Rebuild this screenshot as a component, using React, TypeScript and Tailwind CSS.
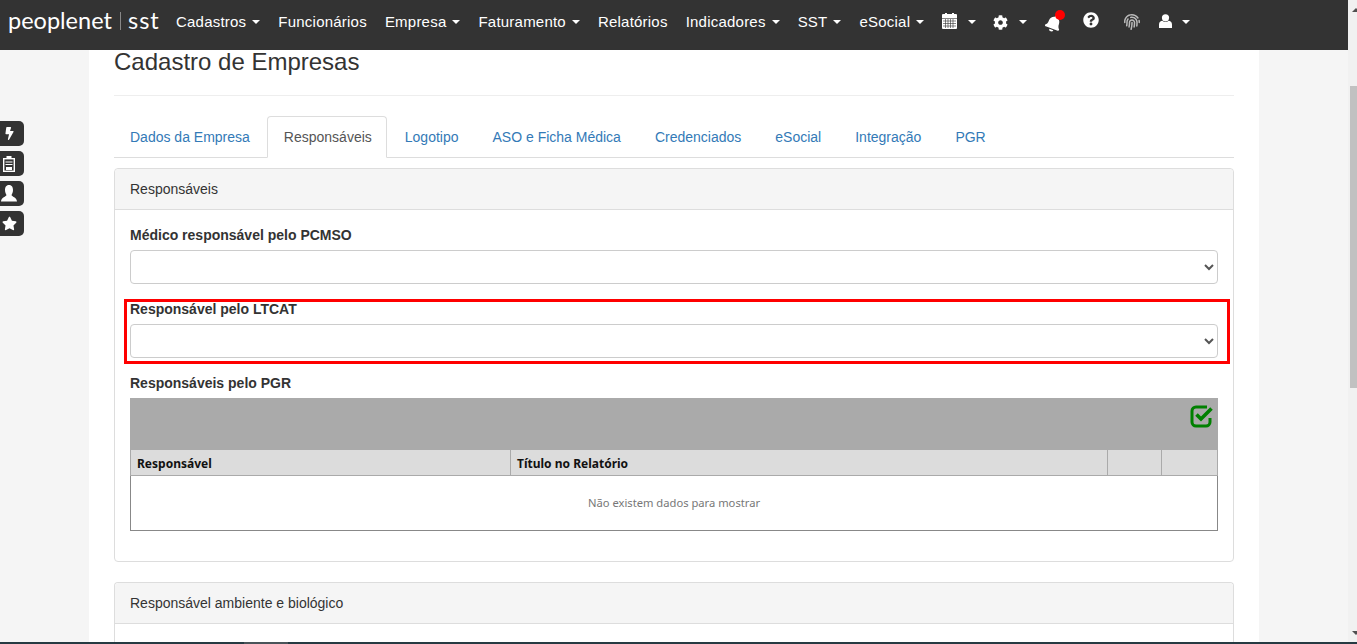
import { FaBell, FaBolt, FaCog, FaFingerprint, FaQuestionCircle, FaStar } from "react-icons/fa"

const TABS = ["Dados da Empresa", "Responsáveis", "Logotipo", "ASO e Ficha Médica", "Credenciados", "eSocial", "Integração", "PGR"]

const MENU = [
  { label: "Cadastros", caret: true },
  { label: "Funcionários", caret: false },
  { label: "Empresa", caret: true },
  { label: "Faturamento", caret: true },
  { label: "Relatórios", caret: false },
  { label: "Indicadores", caret: true },
  { label: "SST", caret: true },
  { label: "eSocial", caret: true },
]

function Caret() {
  return <span className="inline-block h-0 w-0 border-x-4 border-t-4 border-x-transparent border-t-white" />
}

function CalendarIcon() {
  return (
    <svg width="15" height="16" viewBox="0 0 15 16" className="mb-[3px]">
      <rect x="0" y="1" width="15" height="15" rx="1" fill="#fff" />
      <rect x="3" y="0" width="2" height="2" fill="#fff" />
      <rect x="10" y="0" width="2" height="2" fill="#fff" />
      <path d="M0 5.5H15M1 8H14M1 10.5H14M1 13H14M3.5 6V15M6 6V15M8.5 6V15M11 6V15" stroke="#333" strokeWidth="0.6" fill="none" />
    </svg>
  )
}

function NavUserIcon() {
  return (
    <svg width="13" height="14" viewBox="0 0 13 14" fill="#fff" className="mb-[2px]">
      <circle cx="6.5" cy="3.8" r="3.6" />
      <path d="M0 14V10.5C0 8 1.8 6.8 3.4 6.8C5 8.4 8 8.4 9.6 6.8C11.2 6.8 13 8 13 10.5V14Z" />
    </svg>
  )
}

function SideUserIcon() {
  return (
    <svg width="16" height="17" viewBox="0 0 16 17" fill="#fff">
      <path d="M8 0C11 0 12 2.5 12 5C12 7.5 11 9 10.5 10C10.5 11.5 16 12.5 16 16.5H0C0 12.5 5.5 11.5 5.5 10C5 9 4 7.5 4 5C4 2.5 5 0 8 0Z" />
    </svg>
  )
}

function ClipboardIcon() {
  return (
    <svg width="12" height="16" viewBox="0 0 12 16" fill="none">
      <rect x="3.5" y="0" width="5" height="3" fill="#fff" />
      <rect x="0.7" y="2.7" width="10.6" height="12.6" stroke="#fff" strokeWidth="1.4" />
      <path d="M2.5 6H9.5M2.5 8.5H9.5" stroke="#fff" strokeWidth="1.2" />
      <rect x="3" y="11" width="6" height="3" fill="#fff" />
    </svg>
  )
}

function CheckSquareIcon() {
  return (
    <svg width="24" height="23" viewBox="0 0 24 23" fill="none" stroke="#008000" strokeWidth="3">
      <path d="M17 2H6A4 4 0 0 0 2 6V17A4 4 0 0 0 6 21H16A4 4 0 0 0 20 17V13" />
      <path d="M6.5 9.5L11 14L21.5 3.5" strokeWidth="3.6" />
    </svg>
  )
}

function SideButton({ children }: { children: React.ReactNode }) {
  return (
    <div className="flex h-[25px] w-[24px] items-center justify-center rounded-r-[5px] bg-[#333] pr-[6px] text-white">
      {children}
    </div>
  )
}

function Field({ label }: { label: string }) {
  return (
    <div className="mb-[15px]">
      <label className="mb-[5px] block text-[14px] leading-[20px] font-bold text-[#333]">{label}</label>
      <select className="block h-[34px] w-full rounded-[4px] border border-[#ccc] bg-white px-3 text-[14px] text-[#555]" />
    </div>
  )
}

function tabClass(tab: string) {
  if (tab === "Responsáveis") {
    return "mr-[2px] h-[42px] rounded-t-[4px] border border-[#ddd] border-b-white bg-white pr-[14px] pl-[16px] leading-[41px] text-[#555]"
  }
  if (tab === "Dados da Empresa") {
    return "mr-[2px] h-[41px] px-[15px] leading-[43px] text-[#337ab7]"
  }
  return "mr-[2px] h-[41px] px-[16px] leading-[43px] text-[#337ab7]"
}

export default function App() {
  return (
    <div className="relative flex h-[644px] w-[1357px] flex-col overflow-hidden bg-[#f5f5f5] font-['Liberation_Sans',sans-serif] text-[14px] text-[#333]">
      <div className="flex min-h-0 flex-1">
        <div className="flex min-w-0 flex-1 flex-col">
          {/* Navbar */}
          <nav className="flex h-[50px] shrink-0 items-start bg-[#333] text-[15px] text-white">
            <div className="ml-[8px] flex h-[44px] w-[159px] shrink-0 items-center pb-[2px]">
              <span className="w-[106px] font-['Lato',sans-serif] text-[23.5px] leading-none">peoplenet</span>
              <span className="mr-[7px] ml-[6px] h-[18px] w-px bg-[#888]" />
              <span className="font-['Lato',sans-serif] text-[23.5px] leading-none tracking-[1px]">sst</span>
            </div>
            <div className="ml-[9px] flex h-[44px] items-center">
              {MENU.map((item) => (
                <div key={item.label} className="mr-[18px] flex items-center gap-[6px] tracking-[0.22px]">
                  {item.label}
                  {item.caret && <Caret />}
                </div>
              ))}
            </div>
            <div className="flex h-[44px] items-center">
              <CalendarIcon />
              <span className="ml-[11px] flex"><Caret /></span>
              <FaCog className="ml-[17px] text-[15px]" />
              <span className="ml-[11px] flex"><Caret /></span>
              <span className="relative ml-[18px]">
                <FaBell className="mt-[3px] rotate-[20deg] text-[17px]" />
                <span className="absolute top-[-2px] right-[-3px] h-[10px] w-[10px] rounded-full bg-[#f00]" />
              </span>
              <FaQuestionCircle className="mb-[4px] ml-[21px] text-[16px]" />
              <FaFingerprint className="ml-[25px] text-[16px] text-[#bbb]" />
              <span className="ml-[19px] flex"><NavUserIcon /></span>
              <span className="ml-[10px] flex"><Caret /></span>
            </div>
          </nav>

          {/* Page */}
          <main className="mx-[89px] min-h-0 flex-1 bg-white px-[25px]">
            <h1 className="mb-[21px] text-[24px] leading-[24px] font-normal text-[#333]">Cadastro de Empresas</h1>
            <hr className="mb-[20px] border-[#eee]" />

            <ul className="mb-[10px] flex h-[42px] border-b border-[#ddd] pl-px">
              {TABS.map((tab) => (
                <li key={tab} className={tabClass(tab)}>
                  {tab}
                </li>
              ))}
            </ul>

            <section className="mb-[20px] rounded-[4px] border border-[#ddd]">
              <div className="h-[41px] rounded-t-[4px] border-b border-[#ddd] bg-[#f5f5f5] px-[15px] leading-[40px]">Responsáveis</div>
              <div className="px-[15px] pt-[15px] pb-[30px]">
                <Field label="Médico responsável pelo PCMSO" />
                <Field label="Responsável pelo LTCAT" />
                <label className="mb-[5px] block text-[14px] leading-[20px] font-bold">Responsáveis pelo PGR</label>
                <div className="font-['Noto_Sans',sans-serif] text-[12px]">
                  <div className="flex h-[51px] justify-end bg-[#aaa] pt-[7px] pr-[4px]">
                    <CheckSquareIcon />
                  </div>
                  <div className="flex h-[27px] border-y border-[#aaa] bg-[#dcdcdc] leading-[27px] font-bold text-[#111]">
                    <div className="w-[381px] border-r border-l border-[#aaa] px-[6px]">Responsável</div>
                    <div className="w-[597px] border-r border-[#aaa] px-[6px]">Título no Relatório</div>
                    <div className="w-[54px] border-r border-[#aaa]" />
                    <div className="flex-1 border-r border-[#aaa]" />
                  </div>
                  <div className="flex h-[55px] items-center justify-center border-x border-b border-[#888] pt-[1px] text-[11.2px] text-[#777]">
                    Não existem dados para mostrar
                  </div>
                </div>
              </div>
            </section>

            <section className="rounded-t-[4px] border border-b-0 border-[#ddd]">
              <div className="h-[41px] rounded-t-[4px] border-b border-[#ddd] bg-[#f5f5f5] px-[15px] leading-[40px]">Responsável ambiente e biológico</div>
              <div className="h-[18px]" />
            </section>
          </main>
        </div>

        {/* Scrollbar */}
        <div className="relative w-[9px] shrink-0 bg-[#f1f1f1]">
          <span className="absolute top-[8px] left-[4px] h-0 w-0 border-x-4 border-b-4 border-x-transparent border-b-[#505050]" />
          <div className="mt-[86px] ml-[2px] h-[302px] bg-[#c1c1c1]" />
          <span className="absolute bottom-[7px] left-[4px] h-0 w-0 border-x-4 border-t-4 border-x-transparent border-t-[#505050]" />
        </div>
      </div>

      {/* Taskbar edge */}
      <div className="flex h-[2px] shrink-0 bg-[#263a42]">
        <div className="ml-[244px] w-[44px] bg-[#4a5459]" />
      </div>

      {/* Floating shortcuts */}
      <div className="absolute top-[121px] left-0 flex flex-col gap-[5px]">
        <SideButton><FaBolt className="text-[13px]" /></SideButton>
        <SideButton><ClipboardIcon /></SideButton>
        <SideButton><SideUserIcon /></SideButton>
        <SideButton><FaStar className="text-[15px]" /></SideButton>
      </div>

      {/* Highlight */}
      <div className="absolute top-[299px] left-[124px] h-[65px] w-[1106px] border-[3px] border-[#f00]" />
    </div>
  )
}
